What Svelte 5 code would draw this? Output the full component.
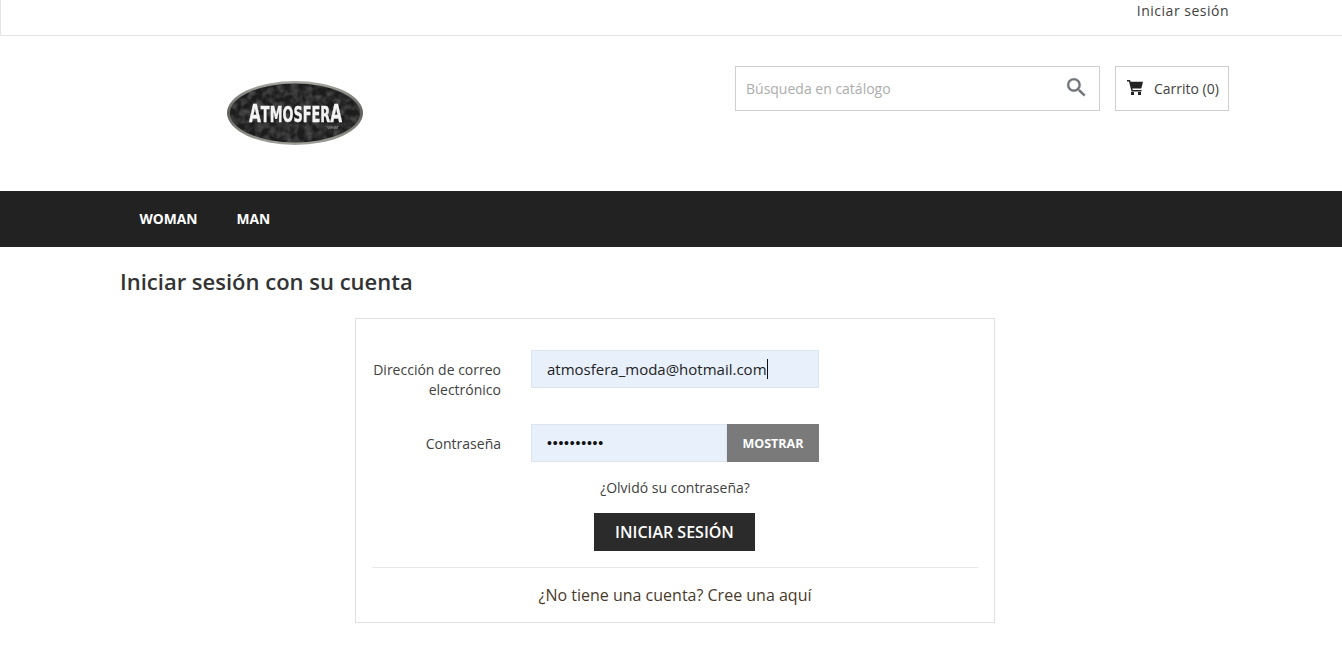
<script>
	let email = 'atmosfera_moda@hotmail.com';
	let dots = '••••••••••';
</script>

<div class="page">
	<div class="topbar">
		<div class="wrap top-inner"><a href="#top" class="signin">Iniciar sesión</a></div>
	</div>

	<header class="wrap head">
		<div class="logo">
			<svg width="138" height="66" viewBox="0 0 138 66" aria-label="Atmosfera">
				<defs>
					<filter id="soft"><feGaussianBlur stdDeviation="0.45" /></filter>
					<filter id="grain" x="0" y="0" width="100%" height="100%">
						<feTurbulence type="fractalNoise" baseFrequency="0.14" numOctaves="2" seed="4" />
						<feColorMatrix values="0 0 0 0 0.33  0 0 0 0 0.33  0 0 0 0 0.33  0.8 0 0 0 -0.3" />
						<feComposite in2="SourceGraphic" operator="in" />
					</filter>
					<linearGradient id="rim" x1="0" y1="0" x2="0" y2="1">
						<stop offset="0" stop-color="#a9a9a3" />
						<stop offset="0.5" stop-color="#5f5f5b" />
						<stop offset="1" stop-color="#a2a29c" />
					</linearGradient>
				</defs>
				<g filter="url(#soft)">
					<ellipse cx="68" cy="32" rx="68" ry="32" fill="url(#rim)" />
					<ellipse cx="68" cy="32" rx="65" ry="29.500" fill="#1f1f1f" />
					<ellipse cx="68" cy="32" rx="65" ry="29.500" fill="#000" filter="url(#grain)" />
					<text x="22" y="41" class="logo-text" textLength="93" lengthAdjust="spacingAndGlyphs"><tspan class="cap">A</tspan>TMOSFER<tspan class="cap">A</tspan></text>
					<text x="106" y="47.500" class="logo-small" text-anchor="middle">wear</text>
				</g>
			</svg>
		</div>
		<div class="tools">
			<div class="search">
				<span class="placeholder">Búsqueda en catálogo</span>
				<svg width="25" height="25" viewBox="0 0 24 24" class="glass">
					<path d="M15.5 14h-.79l-.28-.27A6.47 6.47 0 0 0 16 9.5 6.5 6.5 0 1 0 9.5 16c1.61 0 3.09-.59 4.23-1.57l.27.28v.79l5 4.99L20.49 19l-4.99-5zm-6 0C7.01 14 5 11.99 5 9.500S7.010 5 9.500 5 14 7.010 14 9.500 11.990 14 9.500 14z" />
				</svg>
			</div>
			<div class="cart">
				<svg width="16" height="15" viewBox="0 0 16 15" class="cart-icon">
					<path d="M0 0h3l.6 1.800H16l-1.700 6.700H5.300l.4 1.500h8.800v1.400H4.500L2 1.400H0z" />
					<rect x="4" y="12" width="3" height="3" />
					<rect x="11" y="12" width="3" height="3" />
				</svg>
				<span>Carrito (0)</span>
			</div>
		</div>
	</header>

	<nav class="menu">
		<div class="wrap menu-inner">
			<a href="#woman">WOMAN</a>
			<a href="#man">MAN</a>
		</div>
	</nav>

	<main class="wrap">
		<h1>Iniciar sesión con su cuenta</h1>
		<section class="card">
			<div class="row first">
				<div class="label">Dirección de correo electrónico</div>
				<div class="field email"><span>{email}</span><i class="caret"></i></div>
			</div>
			<div class="row second">
				<div class="label">Contraseña</div>
				<div class="pass">
					<div class="field pw">{dots}</div>
					<div class="show">MOSTRAR</div>
				</div>
			</div>
			<a href="#forgot" class="forgot">¿Olvidó su contraseña?</a>
			<div class="submit-row"><div class="submit">INICIAR SESIÓN</div></div>
			<div class="register"><a href="#register">¿No tiene una cuenta? Cree una aquí</a></div>
		</section>
	</main>
</div>

<style>
	:global(body) {
		margin: 0;
		background: #fff;
		font-family: "Open Sans", sans-serif;
		color: #3d3d3d;
	}

	a {
		color: inherit;
		text-decoration: none;
	}

	.wrap {
		width: 1110px;
		margin-left: 120px;
		box-sizing: border-box;
	}

	.topbar {
		height: 36px;
		box-sizing: border-box;
		border-left: 1px solid #e5e5e5;
		border-bottom: 1px solid #e5e5e5;
	}

	.top-inner {
		display: flex;
		justify-content: flex-end;
		margin-left: 119px;
		padding: 1px 1px 0 0;
	}

	.signin {
		font-size: 14px;
		line-height: 20px;
		letter-spacing: 0.5px;
		color: #414141;
	}

	.head {
		height: 155px;
		display: flex;
		justify-content: space-between;
		align-items: flex-start;
	}

	.logo {
		margin: 45px 0 0 107px;
		line-height: 0;
	}

	.logo svg {
		overflow: visible;
	}

	.logo-text {
		font-family: "DejaVu Sans", sans-serif;
		font-size: 21px;
		font-weight: 700;
		fill: #f4f4f4;
		stroke: #f4f4f4;
		stroke-width: 0.4px;
	}

	.cap {
		font-size: 25px;
	}

	.logo-small {
		font-family: "Open Sans", sans-serif;
		font-size: 5px;
		fill: #999;
	}

	.tools {
		display: flex;
		gap: 15px;
		margin-top: 30px;
		margin-right: 1px;
	}

	.search {
		width: 365px;
		height: 45px;
		box-sizing: border-box;
		border: 1px solid #cfcfcf;
		display: flex;
		align-items: center;
		justify-content: space-between;
		padding: 0 10px 0 10px;
	}

	.placeholder {
		font-size: 14px;
		color: #acacac;
	}

	.glass {
		fill: #6f7277;
		stroke: #6f7277;
		stroke-width: 0.3px;
		margin-top: -2px;
	}

	.cart {
		width: 114px;
		height: 45px;
		box-sizing: border-box;
		border: 1px solid #cfcfcf;
		display: flex;
		align-items: center;
		padding-left: 11px;
		gap: 11px;
		font-size: 14px;
		color: #414141;
	}

	.cart-icon {
		fill: #232323;
		margin-top: -2px;
		flex: none;
	}

	.menu {
		height: 56px;
		background: #222;
	}

	.menu-inner {
		display: flex;
		gap: 39px;
		padding: 0 0 2px 19.5px;
		box-sizing: border-box;
		align-items: center;
		height: 56px;
	}

	.menu a {
		color: #fff;
		font-size: 13.8px;
		font-weight: 700;
	}

	h1 {
		margin: 0;
		padding-top: 19px;
		font-size: 22px;
		line-height: 30px;
		font-weight: 600;
		color: #333;
	}

	.card {
		width: 640px;
		height: 305px;
		box-sizing: border-box;
		margin: 22px 0 0 235px;
		border: 1px solid #e1e1e1;
		padding: 31px 16px 0;
		font-size: 14px;
	}

	.row {
		display: grid;
		grid-template-columns: 129px 288px;
		column-gap: 30px;
		align-items: start;
	}

	.second {
		margin-top: 23px;
		align-items: center;
	}

	.label {
		text-align: right;
		line-height: 20px;
		color: #414141;
	}

	.second .label {
		padding-top: 2px;
	}

	.first .label {
		padding-top: 10px;
		height: 41px;
	}

	.field {
		height: 38px;
		box-sizing: border-box;
		background: #e8f0fc;
		border: 1px solid #dde4ee;
		padding-left: 15px;
		display: flex;
		align-items: center;
		color: #232323;
	}

	.email {
		font-size: 15px;
	}

	.caret {
		width: 1px;
		height: 20px;
		background: #111;
		flex: none;
	}

	.pass {
		display: flex;
	}

	.pw {
		width: 196px;
		font-size: 14px;
		color: #111;
		font-family: "Liberation Sans", sans-serif;
		letter-spacing: 0.8px;
	}

	.show {
		width: 92px;
		height: 38px;
		background: #7a7a7a;
		color: #fff;
		font-size: 12.5px;
		font-weight: 700;
		display: flex;
		align-items: center;
		justify-content: center;
	}

	.forgot {
		display: block;
		text-align: center;
		line-height: 20px;
		margin-top: 16px;
		color: #414141;
	}

	.submit-row {
		display: flex;
		justify-content: center;
		margin-top: 15px;
		padding: 0 1px 16px 0;
		border-bottom: 1px solid #e8e8e8;
	}

	.submit {
		width: 161px;
		height: 38px;
		background: #2b2b2b;
		color: #fff;
		font-size: 16px;
		font-weight: 600;
		display: flex;
		align-items: center;
		justify-content: center;
	}

	.register {
		text-align: center;
		font-size: 16px;
		line-height: 22px;
		margin-top: 16px;
		color: #4a3a2a;
	}
</style>
